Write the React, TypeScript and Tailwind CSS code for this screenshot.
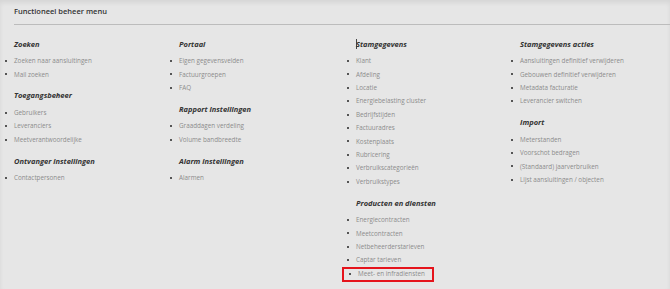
import React from 'react'

// Menu data per column
interface Section {
  title: string
  items: string[]
  highlight?: string
  cursor?: boolean
}

const columns: Section[][] = [
  [
    { title: 'Zoeken', items: ['Zoeken naar aansluitingen', 'Mail zoeken'] },
    { title: 'Toegangsbeheer', items: ['Gebruikers', 'Leveranciers', 'Meetverantwoordelijke'] },
    { title: 'Ontvanger instellingen', items: ['Contactpersonen'] },
  ],
  [
    { title: 'Portaal', items: ['Eigen gegevensvelden', 'Factuurgroepen', 'FAQ'] },
    { title: 'Rapport instellingen', items: ['Graaddagen verdeling', 'Volume bandbreedte'] },
    { title: 'Alarm instellingen', items: ['Alarmen'] },
  ],
  [
    {
      title: 'Stamgegevens',
      cursor: true,
      items: [
        'Klant',
        'Afdeling',
        'Locatie',
        'Energiebelasting cluster',
        'Bedrijfstijden',
        'Factuuradres',
        'Kostenplaats',
        'Rubricering',
        'Verbruikscategorieën',
        'Verbruikstypes',
      ],
    },
    {
      title: 'Producten en diensten',
      items: ['Energiecontracten', 'Meetcontracten', 'Netbeheerderstarieven', 'Captar tarieven', 'Meet- en infradiensten'],
      highlight: 'Meet- en infradiensten',
    },
  ],
  [
    {
      title: 'Stamgegevens acties',
      items: [
        'Aansluitingen definitief verwijderen',
        'Gebouwen definitief verwijderen',
        'Metadata facturatie',
        'Leverancier switchen',
      ],
    },
    {
      title: 'Import',
      items: ['Meterstanden', 'Voorschot bedragen', '(Standaard) jaarverbruiken', 'Lijst aansluitingen / objecten'],
    },
  ],
]

function Item({ label }: { label: string }) {
  return (
    <div className="flex items-center h-[13.4px] -ml-[9px]">
      <span className="w-[2px] h-[2px] bg-[#555] mr-[7px] shrink-0" />
      <span className="text-[6.3px] text-[#8c8c8c] whitespace-nowrap">{label}</span>
    </div>
  )
}

function MenuSection({ section }: { section: Section }) {
  return (
    <div className="flex flex-col">
      <div className="h-[17px] pb-[3px] flex items-center text-[7.5px] font-bold italic text-[#333] whitespace-nowrap">
        {section.cursor && <span className="inline-block w-px h-[10px] bg-[#444] -mr-px" />}
        {section.title}
      </div>
      {section.items.map((it) =>
        it === section.highlight ? (
          <div key={it} className="-ml-[14px] mt-[0.6px] w-[92px] h-[15px] border-2 border-[#e5141c] pl-[14px] flex items-start">
            <div className="flex items-center h-[9px] -ml-[9px]">
              <span className="w-[2px] h-[2px] bg-[#555] mr-[7px] shrink-0" />
              <span className="text-[6.3px] text-[#8c8c8c] whitespace-nowrap">{it}</span>
            </div>
          </div>
        ) : (
          <Item key={it} label={it} />
        )
      )}
    </div>
  )
}

export default function App() {
  return (
    <div
      className="w-[670px] h-[289px] bg-[#e6e6e6] overflow-hidden shadow-[inset_0_3px_4px_rgba(0,0,0,0.07)]"
      style={{ fontFamily: '"Open Sans", sans-serif' }}
    >
      {/* Header */}
      <div className="pl-[14px] pt-[7px] h-[24px]">
        <div className="h-[10px] flex items-center text-[7.5px] font-semibold text-[#333]">Functioneel beheer menu</div>
      </div>
      <div className="ml-[14px] h-px bg-[#bcbcbc]" />

      {/* Columns */}
      <div className="grid grid-cols-[165px_177px_164px_1fr] pl-[14px] pt-[12.3px]">
        {columns.map((col, i) => (
          <div key={i} className="flex flex-col gap-[8px]">
            {col.map((s) => (
              <MenuSection key={s.title} section={s} />
            ))}
          </div>
        ))}
      </div>
    </div>
  )
}
